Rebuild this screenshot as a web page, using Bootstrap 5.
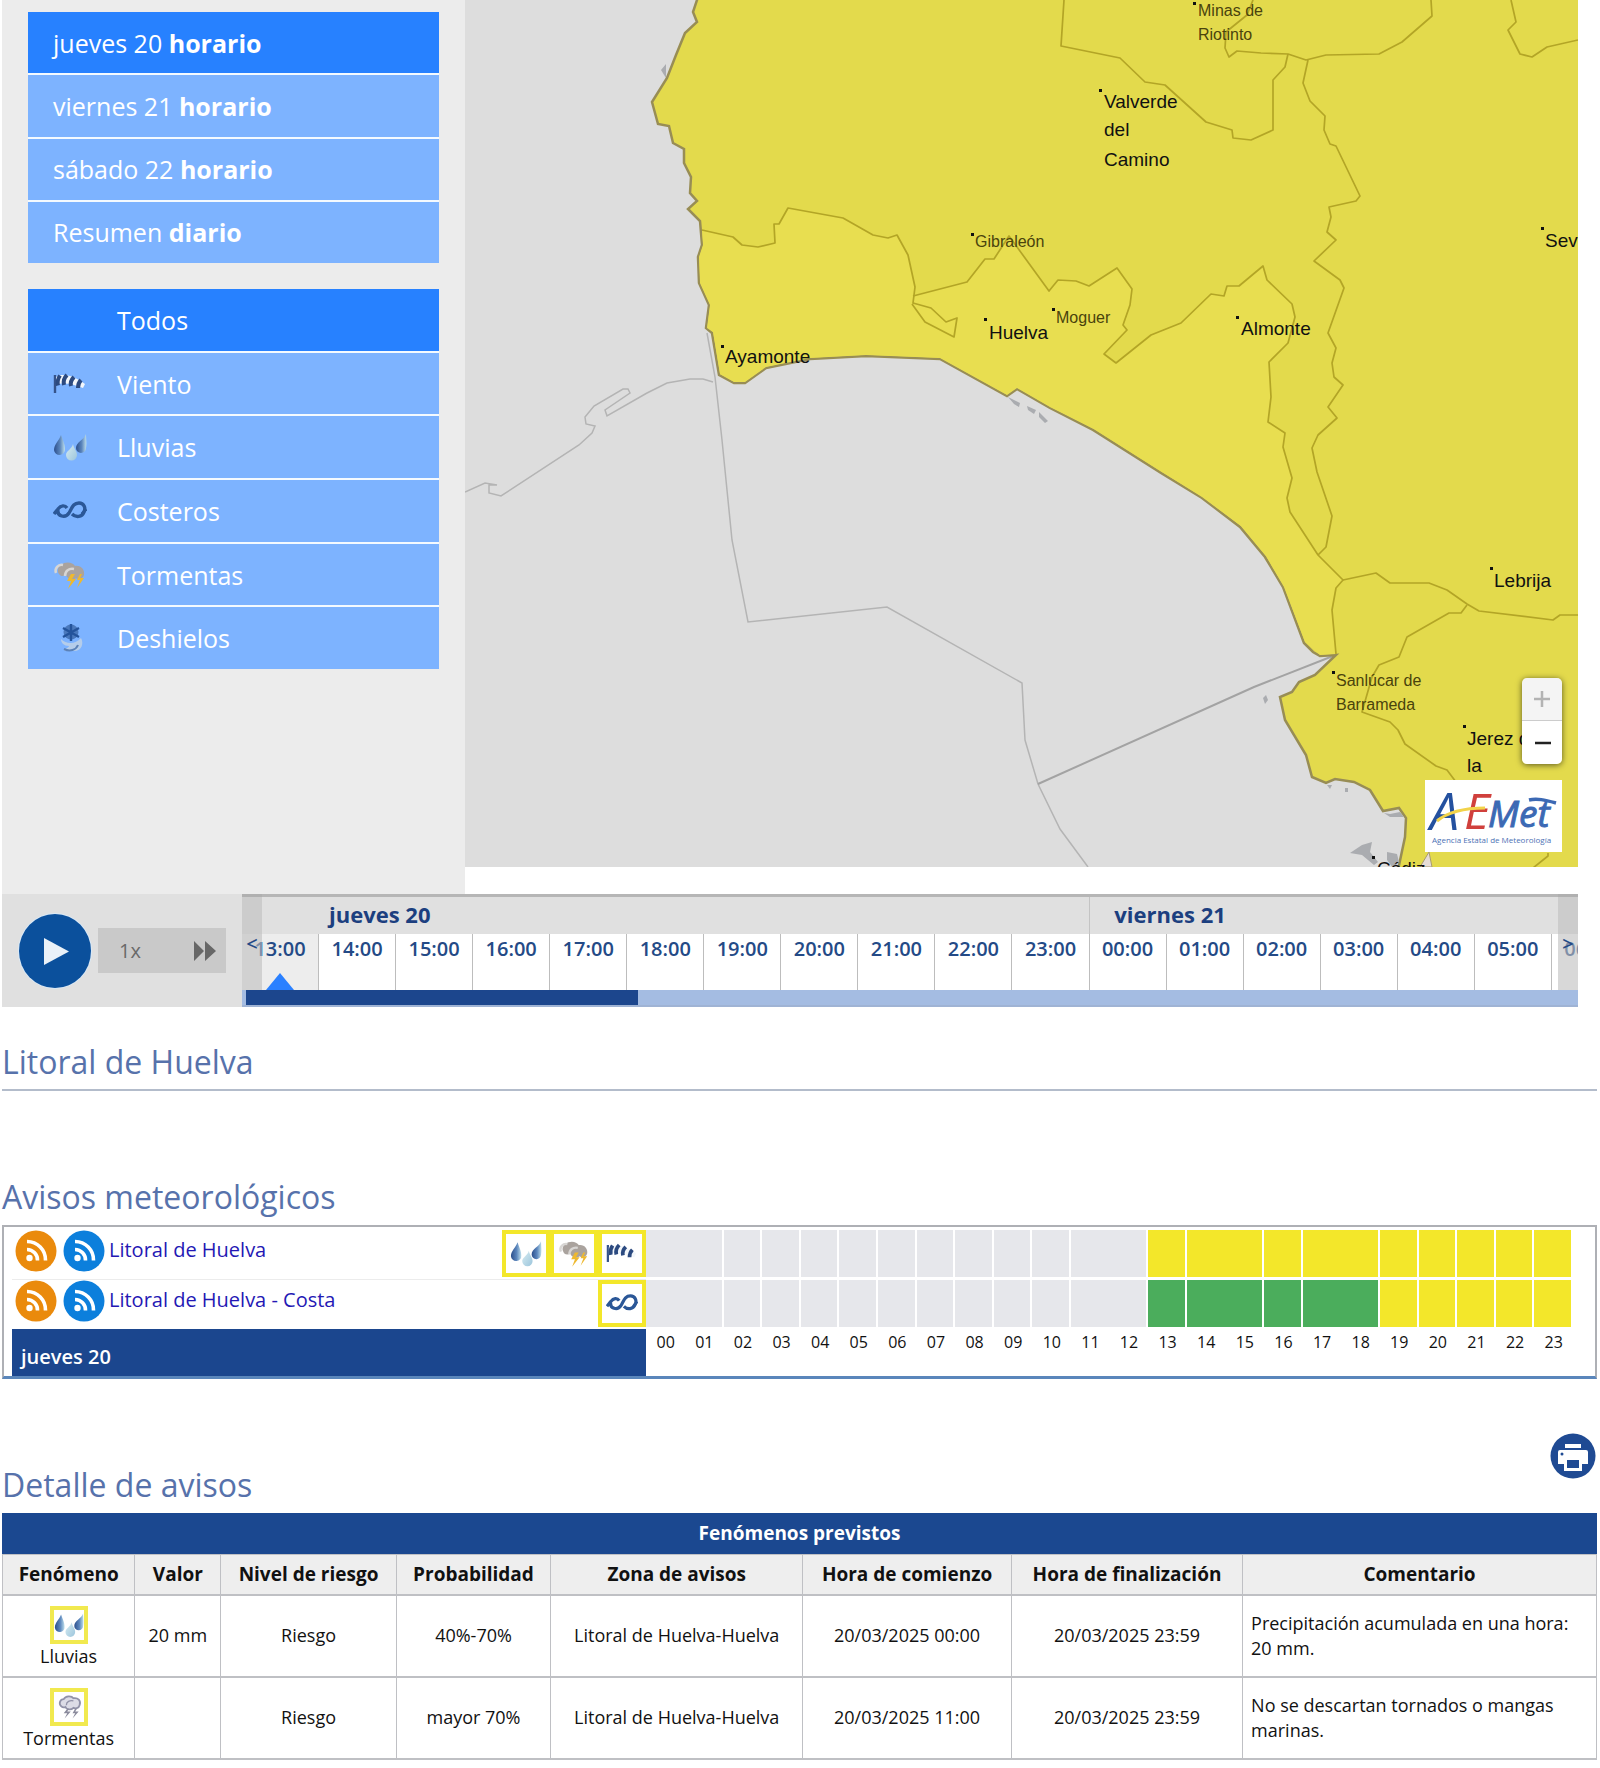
<!DOCTYPE html>
<html lang="es">
<head>
<meta charset="utf-8">
<meta name="viewport" content="width=device-width, initial-scale=1">
<title>Avisos meteorológicos - Litoral de Huelva</title>
<link href="https://cdn.jsdelivr.net/npm/bootstrap@5.3.0/dist/css/bootstrap.min.css" rel="stylesheet">
<style>
  :root { --navy: #1b4890; --line: #bfc0c4; --warn: #f3e72a; }
  body { font-family: "Open Sans", "Noto Sans", sans-serif; color: #111; background: #fff; overflow-x: hidden; }
  .page { padding: 0 3px 8px 2px; }
  .side { flex: 0 0 463px; background: #ececec; padding: 12px 26px 0; }
  .menu { gap: 2px; background: #f4faff; }
  .menu button { flex: 1 1 0; border: 0; background: #7db3ff; color: #fff; font-size: 25px; line-height: 32px; text-align: left; padding: 0 25px; display: flex; align-items: center; }
  .menu button.on { background: #2781ff; }
  .menu-days { height: 251px; margin-bottom: 26px; }
  .menu-kind { height: 380px; }
  .menu .ico { width: 34px; height: 28px; margin-right: 30px; flex: none; }
  .mapa { margin-right: 19px; padding-bottom: 27px; }
  .mapa-in { background: #dddddd; }
  .mapa svg.chart { display: block; width: 100%; height: auto; }
  .chart text { font-family: "Liberation Sans", sans-serif; font-size: 19px; fill: #111; }
  .chart .town text { font-size: 16px; fill: #4a430c; }
  .zoomer { right: 16px; bottom: 103px; width: 40px; border-radius: 5px; box-shadow: 0 1px 6px rgba(0,0,0,.6); overflow: hidden; }
  .zoomer button { border: 0; height: 43px; background: #fff; padding: 0; display: block; width: 100%; }
  .zoomer button:first-child { background: #f4f4f4; border-bottom: 1px solid #ccc; }
  .logo { right: 16px; bottom: 15px; width: 137px; height: 72px; background: #fff; }
  .tl { margin-right: 19px; }
  .tl-ctl { flex: 0 0 240px; background: #e0e0e0; height: 113px; padding-left: 17px; gap: 7px; padding-right: 16px; }
  .play { width: 72px; height: 74px; border: 0; border-radius: 50%; background: #0b509c; padding: 0; flex: none; box-shadow: 0 0 0 1px #d9e9f7; }
  .speed { height: 45px; border: 0; background: #c9c9c9; color: #6a6a6a; font-size: 20px; padding: 0 9px 0 21px; }
  .tl-main { min-width: 0; overflow: hidden; color: var(--navy); }
  .tl-days { height: 40px; background: #e0e0e0; border-top: 3px solid #b6b6b6; font-size: 22px; font-weight: 700; line-height: 34px; color: #1c3f7f; }
  .tl-days > div { border-right: 1px solid #c4c4c4; flex: none; }
  .tl-hours { height: 56px; }
  .tl-hours > div { flex: 0 0 5.768%; border-right: 1px solid #bdbdbd; font-size: 20px; line-height: 30px; font-weight: 600; text-align: center; position: relative; color: #244a86; }
  .tl-hours > div:first-child { background: #ededed; }
  .tri { position: absolute; left: 50%; bottom: 0; margin-left: -14px; border: 14px solid transparent; border-top: 0; border-bottom: 17px solid #2a80ff; }
  .tl-nav { top: 0; width: 20px; height: 96px; background: rgba(190,190,190,.6); border: 0; border-top: 3px solid #b0b0b0; padding: 0; font-size: 20px; font-weight: 600; line-height: 88px; color: #244a86; text-align: center; }
  .tl-bar { height: 17px; background: #a4bce2; border-bottom: 2px solid #9fb3d4; }
  .tl-bar > div { height: 15px; background: #1c468d; margin-left: 4px; width: 392px; }
  h2 { font-size: 32px; line-height: 44px; font-weight: 400; color: #5772ab; margin: 0; }
  .zona { padding-top: 33px; padding-bottom: 5px; border-bottom: 2px solid #b3bccb; margin-bottom: 84px; }
  .avbox { border: 2px solid #aeb0b5; border-bottom: 3px solid #5a86bb; padding: 3px 22px 0 8px; margin-top: 6px; }
  .avrow { display: grid; grid-template-columns: 634fr 926fr; }
  .avname { height: 50px; padding-left: 3px; border-bottom: 1px solid #ececec; }
  .avname a { color: #2418b4; font-size: 20px; line-height: 28px; text-decoration: none; padding-top: 6px; }
  .rss { width: 42px; height: 42px; margin-right: 6px; flex: none; }
  .tile { width: 48px; height: 47px; border: 4px solid var(--warn); background: #fff; padding: 4px; flex: none; }
  .tile svg { display: block; width: 100%; height: 100%; }
  .hrs { display: grid; grid-template-columns: repeat(24, 1fr); }
  .cellrow { height: 47px; }
  .cellrow i { background: #e6e7eb; border-right: 2px solid #fff; }
  .cellrow i.y { background: var(--warn); }
  .cellrow i.g { background: #4bad5c; }
  .cellrow i.j { border-right: 0; }
  .daybar { background: #1b468e; color: #fff; height: 47px; margin-top: -1px; padding: 5px 9px 0; font-size: 20px; line-height: 46px; font-weight: 600; }
  .hlabels { font-size: 16px; line-height: 25px; text-align: center; }
  .det { padding-top: 54px; }
  .det-head { margin-bottom: 6px; }
  .det-head h2 { margin-top: 30px; }
  .print { width: 46px; height: 46px; border: 0; padding: 0; background: none; margin-right: 1px; }
  .det table { width: 100%; table-layout: fixed; border-collapse: collapse; border: 1px solid var(--line); font-size: 18px; line-height: 25px; }
  .det caption { caption-side: top; background: var(--navy); color: #fff; text-align: center; font-weight: 700; padding: 0; line-height: 41px; font-size: 19px; }
  .det th { background: #eee; border: 1px solid var(--line); border-bottom-width: 2px; height: 40px; padding: 0; text-align: center; font-weight: 700; font-size: 19px; white-space: nowrap; }
  .det td { border: 1px solid var(--line); border-bottom-width: 2px; height: 82px; padding: 0; text-align: center; vertical-align: middle; }
  .det td:last-child { text-align: left; padding: 0 8px; }
  .mini { width: 38px; height: 38px; border: 4px solid #f1e94f; background: #fff; display: block; margin: 4px auto 0; }
</style>
<script src="https://cdn.jsdelivr.net/npm/bootstrap@5.3.0/dist/js/bootstrap.bundle.min.js"></script>
</head>
<body>
<svg width="0" height="0" class="position-absolute" aria-hidden="true">
  <defs>
    <linearGradient id="drop" x1="0" y1="0" x2="1" y2="0"><stop offset="0" stop-color="#2c4f8c"/><stop offset=".55" stop-color="#5b86bd"/><stop offset="1" stop-color="#bfe0ec"/></linearGradient>
    <linearGradient id="drop2" x1="0" y1="0" x2="1" y2="1"><stop offset="0" stop-color="#d8edf2"/><stop offset="1" stop-color="#9cc5dc"/></linearGradient>
    <symbol id="wind" viewBox="0 0 34 28">
      <path d="M2 5v18" stroke="#35538a" stroke-width="2.4" fill="none"/>
      <path d="M3 7c8-5 20 0 29 7l-2 4C20 14 10 12 3 15z" fill="#f3f7fb"/>
      <path d="M7 5.500c-2 3-3 6-2 10M14 5c-3 3-4 6-3 10M21 7c-3 3-4 5-3 9M28 10c-2 2-3 4-3 8" stroke="#2c4a80" stroke-width="4" fill="none"/>
    </symbol>
    <symbol id="rain" viewBox="0 0 34 28">
      <path d="M8 2c2 6 4 9 4 14a5.500 5.500 0 0 1-11 1C1 11 6 8 8 2z" fill="url(#drop)"/>
      <path d="M20 11c1 5 4 7 4 11a5.500 5.500 0 0 1-11 0c0-4 6-6 7-11z" fill="url(#drop2)"/>
      <path d="M33 1c0 6 1 9 0 14a5 5 0 0 1-10 0c0-6 8-8 10-14z" fill="url(#drop)"/>
    </symbol>
    <symbol id="coast" viewBox="0 0 34 28">
      <path d="M1 17L5 12C8 8 12 8 14 11M5 13C4 19 12 22 16 16 19 11 20 6 26 6c5 0 7 5 5 9-2 5-8 6-12 2" fill="none" stroke="#2b5797" stroke-width="3.400"/>
      <path d="M29 17l4-5" stroke="#2b5797" stroke-width="3"/>
    </symbol>
    <symbol id="storm" viewBox="0 0 34 28">
      <path d="M6 13a6 6 0 0 1 2-9c4-4 12-3 14 1 6-1 10 4 9 9-1 4-6 5-8 3-3 3-9 1-10-3-3 2-6 1-7-1z" fill="#aaa39e"/>
      <path d="M3 12a6 6 0 0 1 7-8M12 15c0-5 4-8 9-7" stroke="#d8d6d4" stroke-width="2.500" fill="none"/>
      <path d="M18 13l-4 7h4l-3 8 8-10h-4l3-5zM27 13l-3 6h3l-3 8 7-10h-4l2-4z" fill="#eeb92f"/>
    </symbol>
    <symbol id="storm-mono" viewBox="0 0 34 28">
      <path d="M8 13c-3-3-1-8 3-8 2-4 9-4 11-1 5-1 9 3 7 8-1 4-5 4-7 3-3 3-8 2-9-1-2 1-4 0-5-1z" fill="#dcdce6" stroke="#9192a8" stroke-width="2"/>
      <path d="M14 12c0-4 4-6 8-5" fill="none" stroke="#9192a8" stroke-width="1.500"/>
      <path d="M15 16l-4 5h4l-3 6 7-8h-4l2-3zM24 16l-3 5h3l-3 6 7-8h-4l2-3z" fill="#8a8a9c"/>
    </symbol>
    <symbol id="snow" viewBox="0 0 34 28">
      <path d="M8 15c5 5 14 6 20-1 3 5 1 13-7 13h-9c-2-2 4-3 4-5-5 0-8-3-8-7z" fill="#b5cdea"/>
      <path d="M11 25c6 3 12 1 14-4" stroke="#5b82b8" stroke-width="2" fill="none"/>
      <circle cx="18" cy="8" r="7.500" fill="#4a79bd"/>
      <path d="M18 0v17M10 4l16 9M26 4l-16 9" stroke="#24549c" stroke-width="2.400"/>
    </symbol>
    <symbol id="rssi" viewBox="0 0 42 42">
      <circle cx="21" cy="21" r="20.500"/>
      <g fill="none" stroke="#fff" stroke-width="3.600"><path d="M12 19.500a10.500 10.500 0 0 1 10.500 11M12 11.500a18.500 18.500 0 0 1 18.500 19"/></g>
      <circle cx="14.500" cy="28" r="3.200" fill="#fff"/>
    </symbol>
  </defs>
</svg>

<div class="page">
  <div class="d-flex">
    <aside class="side">
      <nav class="menu menu-days d-flex flex-column" aria-label="Día">
        <button type="button" class="on"><span>jueves 20 <b>horario</b></span></button>
        <button type="button"><span>viernes 21 <b>horario</b></span></button>
        <button type="button"><span>sábado 22 <b>horario</b></span></button>
        <button type="button"><span>Resumen <b>diario</b></span></button>
      </nav>
      <nav class="menu menu-kind d-flex flex-column" aria-label="Fenómeno">
        <button type="button" class="on"><span class="ico"></span>Todos</button>
        <button type="button"><svg class="ico"><use href="#wind"/></svg>Viento</button>
        <button type="button"><svg class="ico"><use href="#rain"/></svg>Lluvias</button>
        <button type="button"><svg class="ico"><use href="#coast"/></svg>Costeros</button>
        <button type="button"><svg class="ico"><use href="#storm"/></svg>Tormentas</button>
        <button type="button"><svg class="ico"><use href="#snow"/></svg>Deshielos</button>
      </nav>
    </aside>
    <main class="mapa flex-grow-1">
      <div class="mapa-in position-relative">
        <svg class="chart" viewBox="465 0 1113 867" role="img" aria-label="Mapa de avisos">
          <g fill="none" stroke="#b4b4b4" stroke-width="1.500">
            <path d="M713 382L703 379 690 379 667 383 647 393 607 416 605 410 630 393 628 389 623 389 594 406 585 417 586 424 595 426 592 433 579 445 501 496 489 493 489 485 497 485 485 483 465 492"/>
            <path d="M707 333L715 377 722 440 732 540 748 622 887 607 1022 683 1025 740 1038 784 1060 829 1088 867"/>
            <path d="M1038 784L1254 687 1333 656" stroke="#a3a3a3" stroke-width="2"/>
          </g>
          <path fill="#e3da4c" stroke="#988d55" stroke-width="2.500" d="M698 -3L693 12 697 22 685 33 676 55 667 78 652 102 658 124 669 126 673 143 684 149 684 163 691 177 690 193 697 201 688 209 700 221 702 245 698 257 699 283 709 305 706 328 712 333 719 375 734 383 745 383 766 368 810 359 866 356 940 359 1007 396 1017 389 1050 408 1093 430 1161 473 1202 498 1240 527 1265 557 1283 587 1304 643 1313 652 1320 656 1336 655 1315 675 1299 682 1292 692 1280 697 1285 720 1306 755 1312 777 1326 783 1335 779 1354 782 1370 790 1383 811 1399 808 1406 818 1405 837 1398 870 1582 870 1582 -3z"/>
          <path fill="#e8de50" d="M702 230L733 237 742 245 758 247 775 243 774 224 779 224 788 208 843 218 873 235 888 238 897 235 908 255 915 287 915 295 967 282 985 259 994 259 1009 236 1049 291 1058 280 1076 281 1089 286 1117 268 1132 289 1130 305 1123 325 1127 330 1104 354 1116 363 1151 335 1181 323 1211 294 1224 296 1227 286 1239 286 1263 266 1267 280 1292 304 1295 317 1288 343 1269 362 1271 397 1268 422 1285 433 1283 447 1292 478 1287 498 1290 512 1318 555 1343 580 1336 588 1332 610 1336 654 1320 655 1305 642 1284 587 1266 556 1241 526 1202 497 1162 472 1094 429 1050 407 1017 388 1007 395 940 358 866 355 810 358 766 367 745 382 734 382 720 374 713 332 707 328 710 305 700 283 699 257 703 245z"/>
          <g fill="none" stroke="#b3a526" stroke-width="1.700" stroke-linejoin="round">
            <path d="M702 230L733 237 742 245 758 247 775 243 774 224 779 224 788 208 843 218 873 235 888 238 897 235 908 255 915 287 913 303 931 308 946 322 957 318 954 337 925 322 912 304"/>
            <path d="M913 296L967 282 985 259 994 259 1009 236 1049 291 1058 280 1076 281 1089 286 1117 268 1132 289 1130 305 1123 325 1127 330 1104 354 1116 363 1151 335 1181 323 1211 294 1224 296 1227 286 1239 286 1263 266 1267 280 1292 304 1295 317 1288 343 1269 362 1271 397 1268 422 1285 433 1283 447 1292 478 1287 498 1290 512 1318 555 1343 580 1336 588 1332 610 1336 654"/>
            <path d="M1064 0L1061 46 1120 58 1145 82 1165 85 1206 122 1232 130 1233 138 1251 140 1273 130 1273 80 1285 67 1288 54"/>
            <path d="M1253 0L1247 15 1226 32 1225 48 1229 57 1237 51 1261 53 1288 54 1306 60 1326 55 1379 54 1402 42 1432 16 1431 0"/>
            <path d="M1308 60L1303 83 1310 101 1325 116 1324 130 1330 144 1336 146 1360 196 1356 201 1329 207 1331 217 1327 232 1336 240 1314 261 1340 280 1344 288 1328 333 1336 348 1332 363 1334 377 1343 385 1328 407 1337 418 1318 435 1312 448 1317 472 1332 516 1326 547 1318 555"/>
            <path d="M1511 0L1516 22 1508 30 1520 54 1532 57 1547 47 1578 40"/>
            <path d="M1343 580L1376 573 1390 583 1429 583 1447 590 1467 604 1479 611 1553 620 1560 615 1578 615"/>
            <path d="M1467 605L1461 613 1449 613 1407 637 1399 657 1379 665 1372 677 1362 712 1390 722 1398 730 1405 744 1436 766 1447 770 1456 782M1548 853L1548 856 1533 868"/>
          </g>
          <path d="M1420 867L1429 852 1432 867z" fill="#e6dcd6" stroke="#a89b70"/>
          <g fill="#aaacb0"><path d="M661 70l5-6v14zM1008 397l12 6-1 4-5-3zM1027 406l9 4-2 4-6-4zM1039 412l9 9-3 2-6-6zM1263 698l3-3 2 5-3 4zM1350 853l12-8 10-3-2 10 8 10-4 3-12-10zM1387 852l10 2 2 8-6 6-6-8zM1327 785h5l-2 4zM1345 788h3v4h-3zM1384 813l6 1 10-2 4 5-14 0z"/></g>
          <g>
            <text x="725" y="363">Ayamonte</text><text x="989" y="339">Huelva</text><text x="1241" y="335">Almonte</text>
            <text x="1104" y="108">Valverde</text><text x="1104" y="136">del</text><text x="1104" y="166">Camino</text>
            <text x="1545" y="247">Sevilla</text><text x="1494" y="587">Lebrija</text>
            <text x="1467" y="745">Jerez de</text><text x="1467" y="772">la</text><text x="1377" y="875">Cádiz</text>
          </g>
          <g class="town">
            <text x="975" y="247">Gibraleón</text><text x="1056" y="323">Moguer</text>
            <text x="1198" y="16">Minas de</text><text x="1198" y="40">Riotinto</text>
            <text x="1336" y="686">Sanlúcar de</text><text x="1336" y="710">Barrameda</text>
          </g>
          <path d="M971 233h3v3h-3zM984 318h3v3h-3zM1052 308h3v3h-3zM721 345h3v3h-3zM1099 89h3v3h-3zM1193 2h3v3h-3zM1541 227h3v3h-3zM1236 316h3v3h-3zM1490 567h3v3h-3zM1332 671h3v3h-3zM1463 725h3v3h-3zM1372 856h3v3h-3z" fill="#111"/>
        </svg>
        <div class="zoomer position-absolute">
          <button type="button" aria-label="Acercar"><svg width="40" height="42"><path d="M12 21h16M20 13v16" stroke="#b3b3b3" stroke-width="2.500"/></svg></button>
          <button type="button" aria-label="Alejar"><svg width="40" height="42"><path d="M13 21h16" stroke="#222" stroke-width="2.500"/></svg></button>
        </div>
        <a href="#" class="logo position-absolute" aria-label="AEMet">
          <svg width="137" height="72" viewBox="0 0 137 72" font-family="Open Sans, sans-serif">
            <text y="50" font-size="52" font-style="italic" x="5" fill="#24519f">A</text>
            <text y="49" font-size="50" font-style="italic" fill="#d0403c" x="39">E</text>
            <text y="47" font-size="37" font-style="italic" x="63" fill="#3c69b4" stroke="#3c69b4">Met</text>
            <path d="M12 41C24 31 40 28 60 28" stroke="#f2d34a" stroke-width="3" fill="none"/>
            <path d="M104 20C112 18 120 20 131 23" stroke="#3c69b4" stroke-width="3.500" fill="none"/>
            <text x="7" y="63" font-size="8" fill="#4d72b5">Agencia Estatal de Meteorología</text>
          </svg>
        </a>
      </div>
    </main>
  </div>

  <section class="tl d-flex" aria-label="Línea de tiempo">
    <div class="tl-ctl d-flex align-items-center">
      <button type="button" class="play" aria-label="Reproducir"><svg width="72" height="74" viewBox="0 0 72 74"><path d="M25 24v27l25-13.500z" fill="#eaf1f8"/></svg></button>
      <button type="button" class="speed flex-grow-1 d-flex align-items-center justify-content-between">1x
        <svg width="24" height="20" viewBox="0 0 24 20"><path d="M1 0l10 10L1 20zM12 0l11 10-11 10z" fill="#676767"/></svg></button>
    </div>
    <div class="tl-main flex-grow-1 position-relative">
      <div class="tl-days d-flex"><div style="width:63.500%;padding-left:87px">jueves 20</div><div class="border-0 ps-4">viernes 21</div></div>
      <div class="tl-hours d-flex" id="hours"></div>
      <div class="tl-bar"><div></div></div>
      <button type="button" class="tl-nav position-absolute start-0" aria-label="Anterior">&lt;</button>
      <button type="button" class="tl-nav position-absolute end-0" aria-label="Siguiente">&gt;</button>
    </div>
  </section>

  <section class="zona"><h2>Litoral de Huelva</h2></section>

  <section>
    <h2>Avisos meteorológicos</h2>
    <div class="avbox">
      <div class="avrow">
        <div class="avname d-flex">
          <svg class="rss" fill="#ea8a0c"><use href="#rssi"/></svg><svg class="rss me-1" fill="#0c7fdc"><use href="#rssi"/></svg>
          <a href="#" class="me-auto">Litoral de Huelva</a>
          <span class="tile"><svg><use href="#rain"/></svg></span><span class="tile"><svg><use href="#storm"/></svg></span><span class="tile"><svg><use href="#wind"/></svg></span>
        </div>
        <div class="hrs cellrow" data-k="xxxxxxxxxxxxxyyyyyyyyyyy"></div>
      </div>
      <div class="avrow">
        <div class="avname d-flex">
          <svg class="rss" fill="#ea8a0c"><use href="#rssi"/></svg><svg class="rss me-1" fill="#0c7fdc"><use href="#rssi"/></svg>
          <a href="#" class="me-auto">Litoral de Huelva - Costa</a>
          <span class="tile"><svg><use href="#coast"/></svg></span>
        </div>
        <div class="hrs cellrow" data-k="xxxxxxxxxxxxxggggggyyyyy"></div>
      </div>
      <div class="avrow">
        <div class="daybar">jueves 20</div>
        <div class="hrs hlabels" id="hl"></div>
      </div>
    </div>
  </section>

  <section class="det">
    <div class="det-head d-flex justify-content-between">
      <h2>Detalle de avisos</h2>
      <button type="button" class="print" aria-label="Imprimir"><svg width="46" height="46" viewBox="0 0 46 46"><circle cx="23" cy="23" r="22.500" fill="#1f4a93"/><path d="M15 11h16v4H15z" fill="#fff"/><path d="M10 17h26q2 0 2 2v12h-6v7H14v-7H8V19q0-2 2-2z" fill="#fff"/><path d="M17 27h12v8H17z" fill="#1f4a93"/><circle cx="12" cy="21" r="1.500" fill="#1f4a93"/></svg></button>
    </div>
    <table>
      <caption>Fenómenos previstos</caption>
      <colgroup><col style="width:8.300%"><col style="width:5.400%"><col style="width:11%"><col style="width:9.700%"><col style="width:15.800%"><col style="width:13.100%"><col style="width:14.500%"><col></colgroup>
      <thead><tr><th scope="col">Fenómeno</th><th scope="col">Valor</th><th scope="col">Nivel de riesgo</th><th scope="col">Probabilidad</th><th scope="col">Zona de avisos</th><th scope="col">Hora de comienzo</th><th scope="col">Hora de finalización</th><th scope="col">Comentario</th></tr></thead>
      <tbody>
        <tr><td><svg class="mini"><use href="#rain"/></svg>Lluvias</td><td>20 mm</td><td>Riesgo</td><td>40%-70%</td><td>Litoral de Huelva-Huelva</td><td>20/03/2025 00:00</td><td>20/03/2025 23:59</td><td>Precipitación acumulada en una hora: 20 mm.</td></tr>
        <tr><td><svg class="mini"><use href="#storm-mono"/></svg>Tormentas</td><td></td><td>Riesgo</td><td>mayor 70%</td><td>Litoral de Huelva-Huelva</td><td>20/03/2025 11:00</td><td>20/03/2025 23:59</td><td>No se descartan tornados o mangas marinas.</td></tr>
      </tbody>
    </table>
  </section>
</div>
<script>
  const two = n => String(n).padStart(2, '0');
  document.getElementById('hours').innerHTML = Array.from({length: 18}, (_, i) =>
    `<div>${two((13 + i) % 24)}:00${i ? '' : '<span class="tri"></span>'}</div>`).join('');
  document.getElementById('hl').innerHTML = Array.from({length: 24}, (_, i) => `<span>${two(i)}</span>`).join('');
  // hours whose block runs on into the next one
  const joined = [0, 11, 14, 17];
  document.querySelectorAll('.cellrow').forEach(r => {
    r.innerHTML = [...r.dataset.k].map((k, i) => `<i class="${k}${joined.includes(i) ? ' j' : ''}"></i>`).join('');
  });
</script>
</body>
</html>
